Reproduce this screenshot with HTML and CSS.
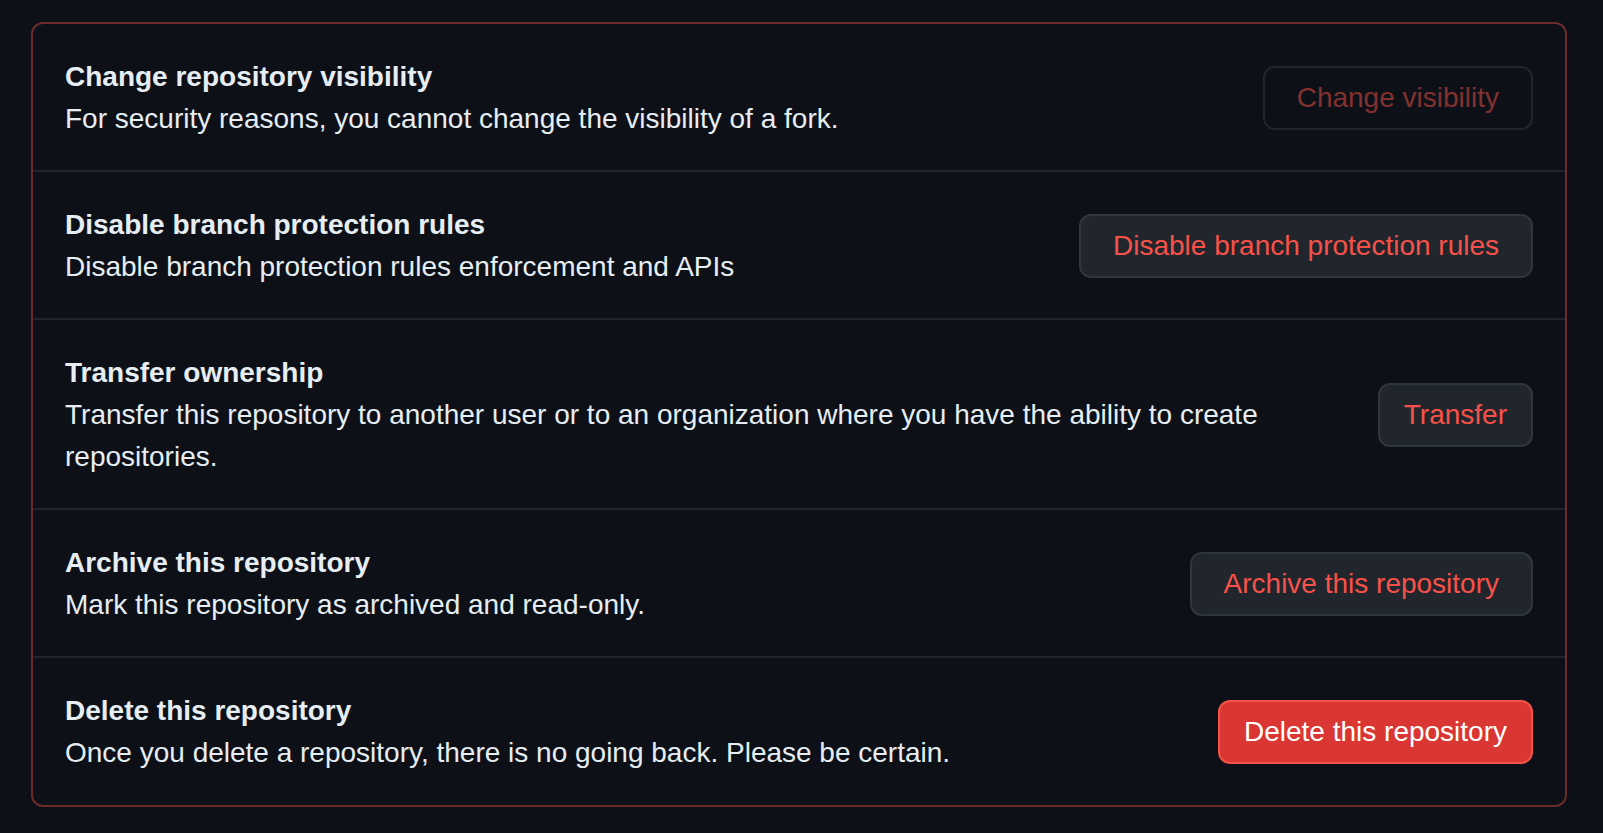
FILE: index.html
```html
<!DOCTYPE html>
<html lang="en">
<head>
<meta charset="utf-8">
<title>Danger Zone</title>
<link rel="stylesheet" href="styles.css">
</head>
<body>
<ul class="danger-box">
  <li class="danger-row">
    <div class="danger-text">
      <strong class="danger-title">Change repository visibility</strong>
      <p class="danger-desc">For security reasons, you cannot change the visibility of a fork.</p>
    </div>
    <button class="btn btn-disabled" disabled>Change visibility</button>
  </li>
  <li class="danger-row">
    <div class="danger-text">
      <strong class="danger-title">Disable branch protection rules</strong>
      <p class="danger-desc">Disable branch protection rules enforcement and APIs</p>
    </div>
    <button class="btn btn-danger">Disable branch protection rules</button>
  </li>
  <li class="danger-row">
    <div class="danger-text">
      <strong class="danger-title">Transfer ownership</strong>
      <p class="danger-desc">Transfer this repository to another user or to an organization where you have the ability to create repositories.</p>
    </div>
    <button class="btn btn-danger btn-compact">Transfer</button>
  </li>
  <li class="danger-row">
    <div class="danger-text">
      <strong class="danger-title">Archive this repository</strong>
      <p class="danger-desc">Mark this repository as archived and read-only.</p>
    </div>
    <button class="btn btn-danger">Archive this repository</button>
  </li>
  <li class="danger-row">
    <div class="danger-text">
      <strong class="danger-title">Delete this repository</strong>
      <p class="danger-desc">Once you delete a repository, there is no going back. Please be certain.</p>
    </div>
    <button class="btn btn-danger-solid btn-compact">Delete this repository</button>
  </li>
</ul>
</body>
</html>
```

FILE: styles.css
```css
html, body {
  margin: 0;
  padding: 0;
  background: #0d1117;
}

body {
  font-family: "Liberation Sans", Arial, sans-serif;
  font-size: 28px;
  line-height: 42px;
  color: #e6edf3;
}

.danger-box {
  list-style: none;
  margin: 22px 36px 0 31px;
  padding: 0;
  border: 2px solid #6b2b2b;
  border-radius: 12px;
}

.danger-row {
  display: flex;
  align-items: center;
  gap: 32px;
  padding: 32px 32px 30px;
  border-top: 2px solid #21262d;
}

.danger-row:first-child {
  border-top: none;
}

.danger-row:last-child {
  padding-bottom: 31px;
}

.danger-text {
  flex: 1 1 auto;
  min-width: 0;
}

.danger-title {
  display: block;
  font-weight: 700;
}

.danger-desc {
  margin: 0;
}

.btn {
  flex: 0 0 auto;
  font-family: inherit;
  font-size: 28px;
  line-height: 40px;
  padding: 10px 32px;
  border-radius: 12px;
  border: 2px solid #30363d;
  background: #21262d;
  color: #f85149;
  white-space: nowrap;
  cursor: pointer;
}

.btn-compact {
  padding-left: 24px;
  padding-right: 24px;
}

.btn-disabled {
  background: #0d1117;
  border-color: #21262d;
  color: rgba(248, 81, 73, 0.5);
  cursor: default;
}

.btn-danger-solid {
  background: #da3633;
  border-color: #f85149;
  color: #ffffff;
}
```
